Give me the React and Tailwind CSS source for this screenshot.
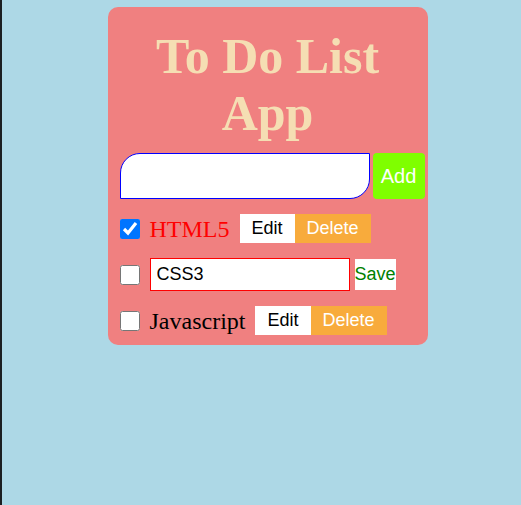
import { useState } from "react";

const serif = "font-['Liberation_Serif',serif]";
const sans = "font-['Liberation_Sans',Arial,sans-serif]";

function TodoRow({ checked, label, red }) {
	return (
		<div className="flex items-center h-[29px]">
			<input type="checkbox" defaultChecked={checked} className="w-5 h-5 m-0" />
			<span className={`${serif} text-[24px] leading-none ml-[10px] ${red ? "text-[#ff0000]" : "text-black"}`}>
				{label}
			</span>
			<button className={`${sans} ml-[10px] h-[29px] px-3 bg-white text-black text-[18px]`}>Edit</button>
			<button className={`${sans} h-[29px] px-3 bg-[#f8ab3c] text-white text-[18px]`}>Delete</button>
		</div>
	);
}

export default function App() {
	const [text, setText] = useState("");

	return (
		<div className="min-h-screen flex bg-[#add8e6]">
			<div className="w-[2px] bg-[#1c1f22]" />
			<div className="flex-1 flex justify-center pl-[12px]">
				<div className="mt-[7px] w-[320px] h-[338px] bg-[#f08080] rounded-[10px] px-3 pt-[21px]">
					<h1 className={`${serif} text-center font-bold text-[50px] leading-[57px] text-[#f5deb3]`}>
						To Do List
						<br />
						App
					</h1>
					<div className="flex gap-[3px] mt-[11px]">
						<input
							value={text}
							onChange={(e) => setText(e.target.value)}
							className="shrink-0 w-[250px] h-[46px] bg-white border border-[#0000ff] rounded-tl-[20px] rounded-br-[20px] outline-none px-2"
						/>
						<button className={`${sans} shrink-0 w-[52px] h-[46px] bg-[#7fff00] text-white text-[20px] rounded-[4px]`}>
							Add
						</button>
					</div>
					<div className="flex flex-col gap-[15px] mt-[15px]">
						<TodoRow checked label="HTML5" red />
						<div className="flex items-center h-[33px]">
							<input type="checkbox" className="w-5 h-5 m-0" />
							<input
								defaultValue="CSS3"
								className={`${sans} ml-[10px] w-[200px] h-[33px] bg-white border border-[#ff0000] px-[6px] text-[18px] text-black outline-none`}
							/>
							<button className={`${sans} ml-[5px] h-[31px] bg-white text-[#008000] text-[18px]`}>Save</button>
						</div>
						<TodoRow label="Javascript" />
					</div>
				</div>
			</div>
		</div>
	);
}
